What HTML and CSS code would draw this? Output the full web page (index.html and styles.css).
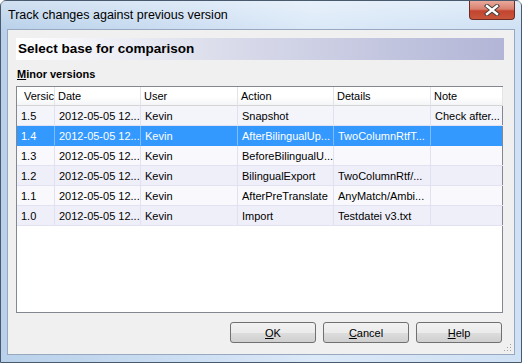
FILE: index.html
```html
<!DOCTYPE html>
<html lang="en">
<head>
<meta charset="UTF-8">
<title>Track changes against previous version</title>
<link rel="stylesheet" href="styles.css">
</head>
<body>

<div class="window">
  <!-- Title bar -->
  <div class="titlebar">
    <span class="title">Track changes against previous version</span>
    <div class="close-btn">
      <svg width="16" height="12" viewBox="0 0 16 12">
        <path d="M3 2 L13 10 M13 2 L3 10" stroke="#3a3a3a" stroke-width="4.2" stroke-linecap="square"/>
        <path d="M3 2 L13 10 M13 2 L3 10" stroke="#ffffff" stroke-width="2.4" stroke-linecap="square"/>
      </svg>
    </div>
  </div>

  <!-- Client area -->
  <div class="client">
    <div class="banner">Select base for comparison</div>
    <div class="group-label"><u>M</u>inor versions</div>

    <div class="listview">
      <div class="row header">
        <div class="cell first">Versic</div>
        <div class="cell">Date</div>
        <div class="cell">User</div>
        <div class="cell">Action</div>
        <div class="cell">Details</div>
        <div class="cell">Note</div>
      </div>
      <div class="row light hover">
        <div class="cell">1.5</div>
        <div class="cell">2012-05-05 12...</div>
        <div class="cell">Kevin</div>
        <div class="cell">Snapshot</div>
        <div class="cell"></div>
        <div class="cell">Check after...</div>
      </div>
      <div class="row selected">
        <div class="cell">1.4</div>
        <div class="cell">2012-05-05 12...</div>
        <div class="cell">Kevin</div>
        <div class="cell">AfterBilingualUp...</div>
        <div class="cell">TwoColumnRtfT...</div>
        <div class="cell"></div>
      </div>
      <div class="row light">
        <div class="cell">1.3</div>
        <div class="cell">2012-05-05 12...</div>
        <div class="cell">Kevin</div>
        <div class="cell">BeforeBilingualU...</div>
        <div class="cell"></div>
        <div class="cell"></div>
      </div>
      <div class="row dark">
        <div class="cell">1.2</div>
        <div class="cell">2012-05-05 12...</div>
        <div class="cell">Kevin</div>
        <div class="cell">BilingualExport</div>
        <div class="cell">TwoColumnRtf/...</div>
        <div class="cell"></div>
      </div>
      <div class="row light">
        <div class="cell">1.1</div>
        <div class="cell">2012-05-05 12...</div>
        <div class="cell">Kevin</div>
        <div class="cell">AfterPreTranslate</div>
        <div class="cell">AnyMatch/Ambi...</div>
        <div class="cell"></div>
      </div>
      <div class="row dark">
        <div class="cell">1.0</div>
        <div class="cell">2012-05-05 12...</div>
        <div class="cell">Kevin</div>
        <div class="cell">Import</div>
        <div class="cell">Testdatei v3.txt</div>
        <div class="cell"></div>
      </div>
    </div>

    <div class="buttons">
      <button class="button"><u>O</u>K</button>
      <button class="button"><u>C</u>ancel</button>
      <button class="button"><u>H</u>elp</button>
    </div>

    <!-- size grip -->
    <svg class="grip" width="8" height="8" viewBox="0 0 8 8">
      <rect x="6" y="0" width="1" height="1" fill="#a0a0a0"/>
      <rect x="3" y="3" width="1" height="1" fill="#a0a0a0"/>
      <rect x="6" y="3" width="1" height="1" fill="#a0a0a0"/>
      <rect x="0" y="6" width="1" height="1" fill="#a0a0a0"/>
      <rect x="3" y="6" width="1" height="1" fill="#a0a0a0"/>
      <rect x="6" y="6" width="1" height="1" fill="#a0a0a0"/>
    </svg>
  </div>
</div>

</body>
</html>
```
FILE: styles.css
```css
/* Dialog window */
body {
margin: 0;
padding: 0;
font-family: "Liberation Sans", Arial, sans-serif;
font-size: 11px;
background-color: #ffffff;
}

.window {
width: 522px;
height: 363px;
box-sizing: border-box;
border: 1px solid #4a5a6e;
border-radius: 6px 6px 0 0;
background: linear-gradient(to right, #b9d1ea 0%, #c9dcf1 30%, #dbe9f8 60%, #cfe1f4 100%);
display: flex;
flex-direction: column;
}

.titlebar {
height: 28px;
display: flex;
align-items: flex-start;
justify-content: space-between;
background: linear-gradient(to bottom, rgba(255,255,255,0.35), rgba(255,255,255,0));
}

.title {
font-family: "Liberation Sans", Arial, sans-serif;
font-size: 12.5px;
color: #000;
padding: 7px 0 0 7px;
}

.close-btn {
width: 46px;
height: 19px;
margin-right: 6px;
box-sizing: border-box;
border: 1px solid #6e2b24;
border-top: none;
border-radius: 0 0 4px 4px;
background: linear-gradient(to bottom, #e9a99b 0%, #d9806f 45%, #c4452f 55%, #c8553c 100%);
display: flex;
align-items: center;
justify-content: center;
}

.client {
position: relative;
flex: 1;
margin: 0 6px 7px 6px;
border: 1px solid #98a9bf;
background-color: #f0f0f0;
padding: 8px 11px 0 8px;
display: flex;
flex-direction: column;
}

.banner {
height: 22px;
margin-right: -1px;
padding-left: 2px;
font-size: 13.5px;
font-weight: bold;
line-height: 22px;
color: #000;
background: linear-gradient(to right, #ffffff 0%, #dcdeec 40%, #b2b5d6 100%);
}

.group-label {
margin-top: 7px;
height: 14px;
line-height: 14px;
padding-left: 1px;
font-weight: bold;
color: #000;
}

/* List view */
.listview {
margin-top: 5px;
height: 227px;
box-sizing: border-box;
border: 1px solid #828790;
background-color: #ffffff;
}

.row {
display: grid;
grid-template-columns: 38px 86px 97px 96px 97px 72px;
height: 20px;
}

.cell {
box-sizing: border-box;
border-right: 1px solid #e1e1f1;
border-bottom: 1px solid #e1e1f1;
padding: 1px 0 0 4px;
line-height: 18px;
white-space: nowrap;
overflow: hidden;
color: #000;
}

.cell:last-child {
border-right: none;
}

.header {
height: 19px;
background: linear-gradient(to bottom, #ffffff 0%, #ffffff 50%, #f3f4f6 100%);
}

.header .cell {
line-height: 18px;
padding-top: 0;
border-right: 1px solid #e3e4e8;
border-bottom: 1px solid #d5d5d5;
padding-left: 3px;
}

.header .cell.first {
padding-left: 7px;
}

.header .cell:last-child {
border-right: 1px solid #e3e4e8;
}

.light {
background-color: #f9f9fd;
}

.light.hover {
background-color: #f4f4fb;
}

.dark {
background-color: #efeff9;
}

.selected {
background-color: #3399ff;
}

.selected .cell {
color: #ffffff;
border-right-color: #7dbcff;
border-bottom-color: #3399ff;
}

/* Buttons */
.buttons {
display: flex;
justify-content: flex-end;
gap: 7px;
margin-top: 9px;
margin-right: 1px;
}

.button {
width: 86px;
height: 21px;
box-sizing: border-box;
border: 1px solid #707070;
border-radius: 3px;
background: linear-gradient(to bottom, #f2f2f2 0%, #ebebeb 50%, #dddddd 51%, #cfcfcf 100%);
font-family: "Liberation Sans", Arial, sans-serif;
font-size: 11px;
color: #000;
padding: 0;
}

.grip {
position: absolute;
right: 2px;
bottom: 2px;
}
```
